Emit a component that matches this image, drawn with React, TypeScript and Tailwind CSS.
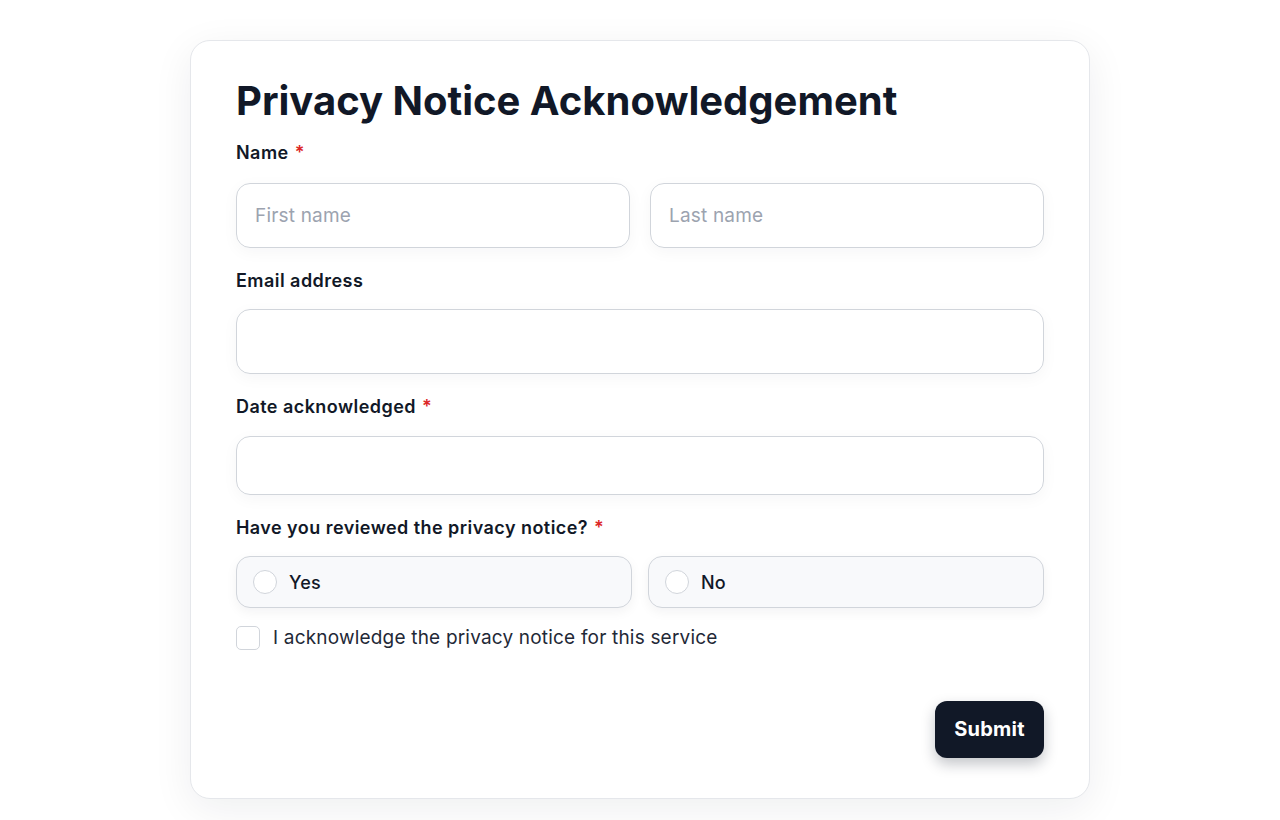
import React from "react";

const font = { fontFamily: "Inter, 'Noto Sans', sans-serif" };

function Label({ text, required }: { text: string; required?: boolean }) {
  return (
    <p className="text-[18px] leading-6 font-semibold text-[#111827] tracking-[0.025em]">
      {text}
      {required && <span className="text-[#dc2626] ml-1.5">*</span>}
    </p>
  );
}

const inputCls =
  "block w-full rounded-[14px] border border-[#d1d5db] px-[18px] text-[19px] tracking-[0.01em] text-[#111827] placeholder:text-[#9ca3af] shadow-[0_4px_16px_rgba(17,24,39,0.04)] outline-none";

export default function App() {
  return (
    <div className="min-h-screen bg-white pt-10 pb-5" style={font}>
      <div className="mx-auto w-[900px] rounded-[20px] border border-[#e5e7eb] bg-white px-[45px] pt-[36px] pb-[40px] shadow-[0_10px_40px_rgba(17,24,39,0.07)]">
        <h1 className="text-[40px] leading-[48px] font-bold text-[#111827]">
          Privacy Notice Acknowledgement
        </h1>

        <div className="mt-4">
          <Label text="Name" required />
          <div className="mt-[18px] grid grid-cols-2 gap-5">
            <input placeholder="First name" className={`h-[65px] ${inputCls}`} />
            <input placeholder="Last name" className={`h-[65px] ${inputCls}`} />
          </div>
        </div>

        <div className="mt-[21px]">
          <Label text="Email address" />
          <input className={`mt-4 h-[65px] ${inputCls}`} />
        </div>

        <div className="mt-[21px]">
          <Label text="Date acknowledged" required />
          <input className={`mt-[17px] h-[59px] ${inputCls}`} />
        </div>

        <div className="mt-[21px]">
          <Label text="Have you reviewed the privacy notice?" required />
          <div className="mt-4 grid grid-cols-2 gap-4">
            {["Yes", "No"].map((opt) => (
              <label
                key={opt}
                className="flex h-[52px] items-center gap-3 rounded-[14px] border border-[#d1d5db] bg-[#f8f9fb] pl-4 shadow-[0_4px_12px_rgba(17,24,39,0.05)]"
              >
                <span className="h-6 w-6 rounded-full border border-[#d1d5db] bg-white" />
                <span className="text-[18px] font-medium tracking-[0.01em] text-[#111827]">{opt}</span>
              </label>
            ))}
          </div>
        </div>

        <label className="mt-[16px] flex items-center gap-[13px]">
          <span className="h-6 w-6 rounded-[5px] border border-[#d1d5db] bg-white" />
          <span className="text-[19px] tracking-[0.01em] text-[#1f2937]">I acknowledge the privacy notice for this service</span>
        </label>

        <div className="mt-[48px] flex justify-end">
          <button className="h-[57px] w-[109px] rounded-[12px] bg-[#111827] text-[20px] font-bold tracking-[0.01em] text-white shadow-[0_6px_14px_rgba(17,24,39,0.25)]">
            Submit
          </button>
        </div>
      </div>
    </div>
  );
}
